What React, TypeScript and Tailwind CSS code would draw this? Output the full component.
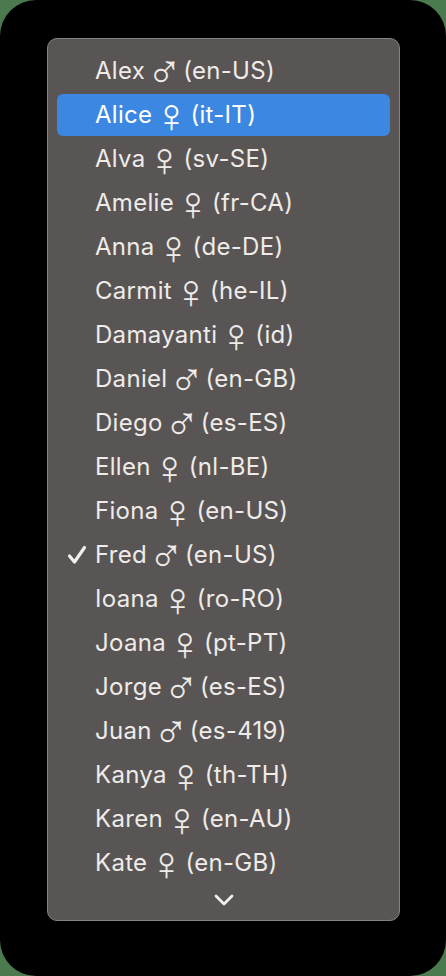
import React from 'react';

type Voice = { name: string; male: boolean; locale: string };

const voices: Voice[] = [
  { name: 'Alex', male: true, locale: 'en-US' },
  { name: 'Alice', male: false, locale: 'it-IT' },
  { name: 'Alva', male: false, locale: 'sv-SE' },
  { name: 'Amelie', male: false, locale: 'fr-CA' },
  { name: 'Anna', male: false, locale: 'de-DE' },
  { name: 'Carmit', male: false, locale: 'he-IL' },
  { name: 'Damayanti', male: false, locale: 'id' },
  { name: 'Daniel', male: true, locale: 'en-GB' },
  { name: 'Diego', male: true, locale: 'es-ES' },
  { name: 'Ellen', male: false, locale: 'nl-BE' },
  { name: 'Fiona', male: false, locale: 'en-US' },
  { name: 'Fred', male: true, locale: 'en-US' },
  { name: 'Ioana', male: false, locale: 'ro-RO' },
  { name: 'Joana', male: false, locale: 'pt-PT' },
  { name: 'Jorge', male: true, locale: 'es-ES' },
  { name: 'Juan', male: true, locale: 'es-419' },
  { name: 'Kanya', male: false, locale: 'th-TH' },
  { name: 'Karen', male: false, locale: 'en-AU' },
  { name: 'Kate', male: false, locale: 'en-GB' },
];

const App: React.FC = () => {
  return (
    <div className="w-[446px] h-[976px] bg-[#4b7a4f]">
      <div className="w-full h-full bg-black rounded-[36px] pt-[38px] pl-[47px]">
        <div
          className="w-[353px] h-[883px] bg-[#595554] border border-[#858280] rounded-[10px] pt-[10px] text-[#eeebe9] text-[24px] leading-none"
          style={{ fontFamily: 'Inter, "DejaVu Sans", sans-serif' }}
        >
          {voices.map((v) => {
            const selected = v.name === 'Alice';
            const checked = v.name === 'Fred';
            return (
              <div key={v.name} className="h-[44px] px-[9px] flex items-center">
                <div
                  className={`h-[42px] w-full rounded-[6px] flex items-center ${
                    selected ? 'bg-[#3b87e2] text-white' : ''
                  }`}
                >
                  <div className="w-[38px] flex justify-end pr-[8px]">
                    {checked && (
                      <svg width="20" height="20" viewBox="0 0 20 20">
                        <path
                          d="M2.5 11 L7.5 17 L17.5 2.5"
                          fill="none"
                          stroke="#f2efed"
                          strokeWidth="3.2"
                          strokeLinecap="round"
                          strokeLinejoin="round"
                        />
                      </svg>
                    )}
                  </div>
                  <span className="whitespace-nowrap tracking-[0.3px] flex items-center">
                    {v.name}
                    <span className="mx-[9px] w-[20px] h-[26px] flex items-center justify-center">
                      <span className="text-[48px] leading-[26px] font-extralight font-['DejaVu_Sans'] tracking-normal">
                        {v.male ? '♂' : '♀'}
                      </span>
                    </span>
                    ({v.locale})
                  </span>
                </div>
              </div>
            );
          })}
          <div className="flex justify-center pt-[8px]">
            <svg width="22" height="14" viewBox="0 0 22 14">
              <path
                d="M3 3 L11 11 L19 3"
                fill="none"
                stroke="#f2efed"
                strokeWidth="2.8"
                strokeLinecap="round"
                strokeLinejoin="round"
              />
            </svg>
          </div>
        </div>
      </div>
    </div>
  );
};

export default App;
